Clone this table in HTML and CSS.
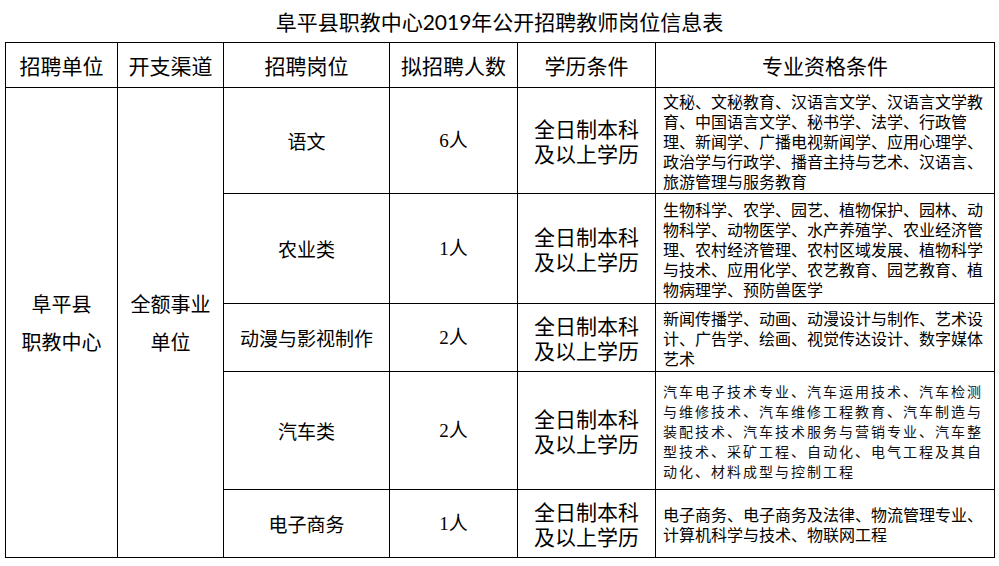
FILE: index.html
```html
<!DOCTYPE html>
<html lang="zh-CN">
<head>
<meta charset="utf-8">
<title>阜平县职教中心2019年公开招聘教师岗位信息表</title>
<link rel="stylesheet" href="styles.css">
</head>
<body>
<div class="title">阜平县职教中心2019年公开招聘教师岗位信息表</div>
<table class="jobs">
  <colgroup>
    <col class="c-unit">
    <col class="c-fund">
    <col class="c-post">
    <col class="c-num">
    <col class="c-edu">
    <col class="c-major">
  </colgroup>
  <thead>
    <tr class="r-head">
      <th>招聘单位</th>
      <th>开支渠道</th>
      <th>招聘岗位</th>
      <th>拟招聘人数</th>
      <th>学历条件</th>
      <th>专业资格条件</th>
    </tr>
  </thead>
  <tbody>
    <tr class="r1">
      <td rowspan="5" class="tall">阜平县<br>职教中心</td>
      <td rowspan="5" class="tall">全额事业<br>单位</td>
      <td class="post">语文</td>
      <td class="num">6人</td>
      <td class="edu">全日制本科<br>及以上学历</td>
      <td class="major">文秘、文秘教育、汉语言文学、汉语言文学教<br>育、中国语言文学、秘书学、法学、行政管<br>理、新闻学、广播电视新闻学、应用心理学、<br>政治学与行政学、播音主持与艺术、汉语言、<br>旅游管理与服务教育</td>
    </tr>
    <tr class="r2">
      <td class="post">农业类</td>
      <td class="num">1人</td>
      <td class="edu">全日制本科<br>及以上学历</td>
      <td class="major">生物科学、农学、园艺、植物保护、园林、动<br>物科学、动物医学、水产养殖学、农业经济管<br>理、农村经济管理、农村区域发展、植物科学<br>与技术、应用化学、农艺教育、园艺教育、植<br>物病理学、预防兽医学</td>
    </tr>
    <tr class="r3">
      <td class="post">动漫与影视制作</td>
      <td class="num">2人</td>
      <td class="edu">全日制本科<br>及以上学历</td>
      <td class="major">新闻传播学、动画、动漫设计与制作、艺术设<br>计、广告学、绘画、视觉传达设计、数字媒体<br>艺术</td>
    </tr>
    <tr class="r4">
      <td class="post">汽车类</td>
      <td class="num">2人</td>
      <td class="edu">全日制本科<br>及以上学历</td>
      <td class="major thin">汽车电子技术专业、汽车运用技术、汽车检测<br>与维修技术、汽车维修工程教育、汽车制造与<br>装配技术、汽车技术服务与营销专业、汽车整<br>型技术、采矿工程、自动化、电气工程及其自<br>动化、材料成型与控制工程</td>
    </tr>
    <tr class="r5">
      <td class="post">电子商务</td>
      <td class="num">1人</td>
      <td class="edu">全日制本科<br>及以上学历</td>
      <td class="major">电子商务、电子商务及法律、物流管理专业、<br>计算机科学与技术、物联网工程</td>
    </tr>
  </tbody>
</table>
</body>
</html>
```
FILE: styles.css
```css
html, body {
  margin: 0;
  padding: 0;
  background: #fff;
  color: #000;
  font-family: "Noto Sans CJK SC", "Noto Sans", sans-serif;
}

.title {
  height: 42px;
  box-sizing: border-box;
  padding-top: 8px;
  line-height: 28px;
  font-size: 21px;
  text-align: center;
  font-family: "Lato", "Noto Sans CJK SC", sans-serif;
  white-space: nowrap;
}

.jobs {
  margin-left: 5px;
  width: 989px;
  border-collapse: collapse;
  table-layout: fixed;
}

.c-unit { width: 112px; }
.c-fund { width: 106px; }
.c-post { width: 166px; }
.c-num { width: 128px; }
.c-edu { width: 138px; }
.c-major { width: 339px; }

.jobs th,
.jobs td {
  border: 1px solid #000;
  padding: 0;
  text-align: center;
  vertical-align: middle;
  font-weight: normal;
}

.jobs th {
  font-size: 21px;
  line-height: 28px;
}

.r-head { height: 45px; }
.r1 { height: 106px; }
.r2 { height: 110px; }
.r3 { height: 68px; }
.r4 { height: 118px; }
.r5 { height: 68px; }

.tall {
  font-size: 20px;
  line-height: 38px;
}

.post {
  font-size: 19px;
  line-height: 26px;
}

.num {
  font-size: 19px;
  line-height: 26px;
  font-family: "Liberation Serif", "Noto Sans CJK SC", serif;
}

.edu {
  font-size: 21px;
  line-height: 25px;
}

.jobs .major {
  text-align: left;
  font-size: 16px;
  line-height: 20px;
  padding-left: 7px;
  white-space: nowrap;
}

.jobs .major.thin {
  font-size: 14px;
  letter-spacing: 2px;
  color: #111;
}
```
